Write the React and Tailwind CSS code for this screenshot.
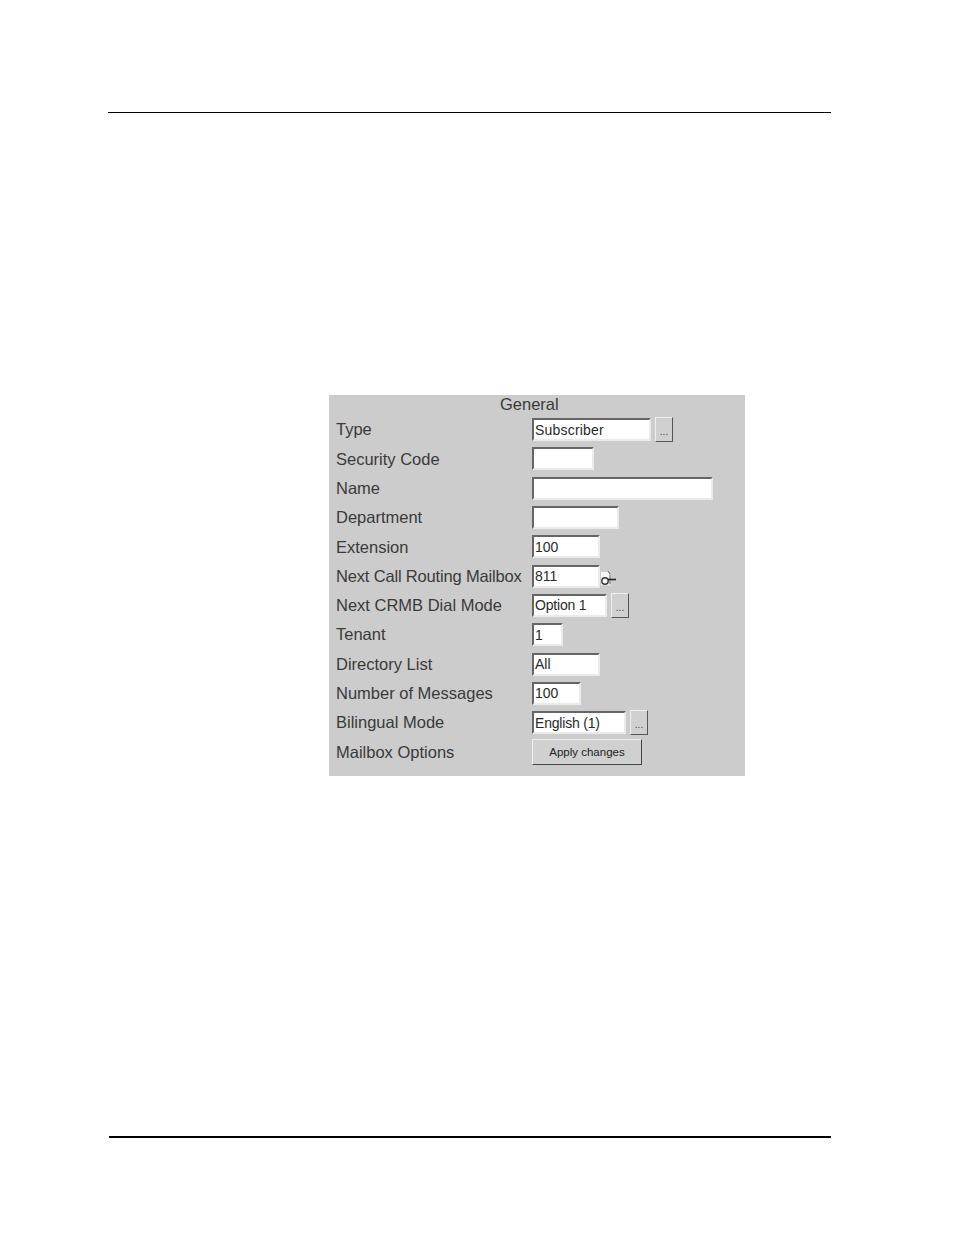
const rows = [
  { label: "Type", value: "Subscriber", w: "w-[119px]", more: true, valueClass: "tracking-[0.2px]" },
  { label: "Security Code", value: "", w: "w-[62px]" },
  { label: "Name", value: "", w: "w-[181px]" },
  { label: "Department", value: "", w: "w-[87px]" },
  { label: "Extension", value: "100", w: "w-[68px]" },
  { label: "Next Call Routing Mailbox", value: "811", w: "w-[68px]", icon: true, labelClass: "tracking-[-0.17px]" },
  { label: "Next CRMB Dial Mode", value: "Option 1", w: "w-[75px]", more: true, valueClass: "tracking-[-0.2px]" },
  { label: "Tenant", value: "1", w: "w-[31px]" },
  { label: "Directory List", value: "All", w: "w-[68px]" },
  { label: "Number of Messages", value: "100", w: "w-[49px]" },
  { label: "Bilingual Mode", value: "English (1)", w: "w-[94px]", more: true, valueClass: "tracking-[-0.2px]" },
];

function Field({ value, w, valueClass = "" }) {
  return (
    <div className={`${w} h-[23px] bg-white border-2 border-t-[#666666] border-l-[#666666] border-r-[#ebebeb] border-b-[#ebebeb] pl-px flex items-center text-[14px] leading-none text-[#2a2a2a] whitespace-nowrap overflow-hidden ${valueClass}`}>
      {value}
    </div>
  );
}

function More() {
  return (
    <div className="ml-1 w-[18px] h-[25px] bg-[#d0d0d0] border border-t-[#efefef] border-l-[#efefef] border-r-[#555555] border-b-[#555555] flex items-center justify-center text-[10px] leading-none text-[#444444] pt-[5px]">
      ...
    </div>
  );
}

function LinkIcon() {
  return (
    <svg className="mt-[5px]" width="18" height="18" viewBox="0 0 18 18" fill="none">
      <path d="M1 2h7l3 3v11H1z" fill="#f6f6f6" />
      <path d="M8 1l2 3" stroke="#666666" strokeWidth="1" />
      <path d="M10 4.5v10" stroke="#555555" strokeWidth="1" />
      <path d="M1 16h9" stroke="#bbbbbb" strokeWidth="1" />
      <circle cx="5" cy="11" r="3.2" stroke="#333333" strokeWidth="1.4" />
      <path d="M8 9.5h8" stroke="#222222" strokeWidth="1.6" />
    </svg>
  );
}

export default function App() {
  return (
    <div className="w-[954px] h-[1235px] bg-white overflow-hidden font-['Liberation_Sans',Arial,sans-serif] pt-[112px]">
      <div className="ml-[108px] w-[723px] h-px bg-black" />
      <div className="ml-[329px] mt-[282px] w-[416px] h-[381px] bg-[#cccccc] text-[#3a3a3a]">
        <div className="h-5 pl-[171px] text-[16.5px] leading-[18px]">General</div>
        <div className="pl-[7px]">
          {rows.map((r) => (
            <div key={r.label} className="h-[29.3px] flex items-center">
              <div className={`w-[196px] text-[16.5px] leading-none whitespace-nowrap ${r.labelClass || ""}`}>{r.label}</div>
              <Field value={r.value} w={r.w} valueClass={r.valueClass} />
              {r.more && <More />}
              {r.icon && <LinkIcon />}
            </div>
          ))}
          <div className="h-[29.3px] flex items-center">
            <div className="w-[196px] text-[16.5px] leading-none whitespace-nowrap">Mailbox Options</div>
            <div className="w-[110px] h-[26px] pt-px bg-[#d0d0d0] border border-t-[#efefef] border-l-[#efefef] border-r-[#444444] border-b-[#444444] flex items-center justify-center text-[11.5px] leading-none text-[#222222]">
              Apply changes
            </div>
          </div>
        </div>
      </div>
      <div className="ml-[109px] mt-[360px] w-[722px] h-[2px] bg-black" />
    </div>
  );
}
